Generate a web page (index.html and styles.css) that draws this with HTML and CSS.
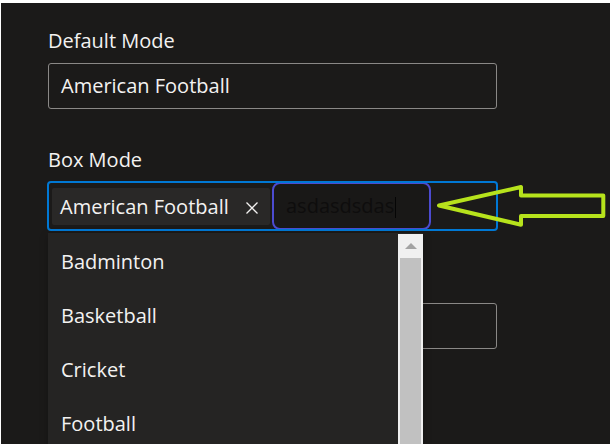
FILE: index.html
```html
<!DOCTYPE html>
<html lang="en">
<head>
<meta charset="utf-8">
<title>Modes</title>
<link rel="stylesheet" href="styles.css">
</head>
<body>
<div class="page">
  <div class="form">
    <div class="field">
      <label class="label">Default Mode</label>
      <div class="textfield">American Football</div>
    </div>
    <div class="field">
      <label class="label">Box Mode</label>
      <div class="combo">
        <div class="tag">
          <span class="tag-text">American Football</span>
          <span class="tag-close">
            <svg width="14" height="14" viewBox="0 0 14 14"><path d="M1.5 1.5 L12.5 12.5 M12.5 1.5 L1.5 12.5" stroke="#f3f2f1" stroke-width="1.3" fill="none"/></svg>
          </span>
        </div>
        <div class="picker-input"><span class="typed">asdasdsdas</span><span class="caret"></span></div>
      </div>
    </div>
    <div class="field">
      <div class="label label-empty"></div>
      <div class="textfield"></div>
    </div>
  </div>

  <div class="dropdown">
    <div class="options">
      <div class="option">Badminton</div>
      <div class="option">Basketball</div>
      <div class="option">Cricket</div>
      <div class="option">Football</div>
    </div>
    <div class="scrollbar">
      <div class="sb-up"><span class="sb-arrow"></span></div>
      <div class="sb-thumb"></div>
    </div>
  </div>

  <svg class="annotation" width="610" height="444" viewBox="0 0 610 444">
    <polygon points="439,205.5 521,187 521,195.5 603.3,195.5 603.3,216 521,216 521,224.7" fill="none" stroke="#b7e31c" stroke-width="4" stroke-linejoin="round"/>
  </svg>
</div>
</body>
</html>
```
FILE: styles.css
```css
html, body {
  margin: 0;
  padding: 0;
  background: #ffffff;
}

body {
  font-family: "Open Sans", "Noto Sans", sans-serif;
  color: #f3f2f1;
}

.page {
  position: relative;
  margin: 3px 0 0 1px;
  height: 441px;
  box-sizing: border-box;
  padding: 15px 0 0 47px;
  background: #1b1a19;
  overflow: hidden;
}

.form {
  width: 449px;
  display: flex;
  flex-direction: column;
  gap: 28px;
}

.field {
  display: flex;
  flex-direction: column;
}

.label {
  display: block;
  font-size: 20px;
  font-weight: 500;
  line-height: 30px;
  padding: 7.5px 0;
  color: #f3f2f1;
}

.label-empty {
  height: 30px;
}

.textfield {
  height: 46px;
  box-sizing: border-box;
  border: 1px solid #8a8886;
  border-radius: 3px;
  padding: 0 12px;
  font-size: 20px;
  line-height: 44px;
  color: #f3f2f1;
}

.combo {
  height: 48px;
  box-sizing: border-box;
  border-radius: 3px;
  outline: 2px solid #0078d4;
  outline-offset: -1px;
  display: flex;
  align-items: center;
  gap: 2px;
  padding-left: 4px;
}

.tag {
  width: 218px;
  height: 37px;
  flex: 0 0 auto;
  display: flex;
  align-items: center;
  background: #292827;
  border-radius: 2px;
  padding-left: 8px;
  box-sizing: border-box;
}

.tag-text {
  font-size: 20px;
  line-height: 37px;
  white-space: nowrap;
  color: #f3f2f1;
}

.tag-close {
  margin-left: auto;
  width: 36px;
  height: 37px;
  display: flex;
  align-items: center;
  justify-content: center;
  padding-top: 3px;
  box-sizing: border-box;
}

.picker-input {
  width: 159px;
  height: 48px;
  flex: 0 0 auto;
  box-sizing: border-box;
  border: 2px solid #4c4bd0;
  border-radius: 8px;
  background: #191817;
  padding-left: 12px;
  display: flex;
  align-items: center;
}

.typed {
  font-size: 20px;
  line-height: 44px;
  color: #0e0d0d;
  white-space: nowrap;
}

.caret {
  width: 1px;
  height: 21px;
  margin-left: 1px;
  margin-top: 3px;
  background: #050505;
}

.dropdown {
  position: absolute;
  top: 230px;
  left: 47px;
  width: 375px;
  height: 240px;
  display: flex;
  background: #252423;
  box-shadow: 0 3px 8px rgba(0, 0, 0, 0.25);
}

.options {
  flex: 1;
  padding-top: 2px;
}

.option {
  height: 54px;
  line-height: 54px;
  padding-left: 13px;
  font-size: 20px;
  color: #f3f2f1;
  white-space: nowrap;
}

.scrollbar {
  width: 25px;
  margin-top: 1px;
  background: #f0f0f0;
  display: flex;
  flex-direction: column;
}

.sb-up {
  height: 24px;
  display: flex;
  align-items: center;
  justify-content: center;
}

.sb-arrow {
  width: 0;
  height: 0;
  border-left: 6px solid transparent;
  border-right: 6px solid transparent;
  border-bottom: 6px solid #a3a3a3;
}

.sb-thumb {
  flex: 1;
  margin: 0 2px;
  background: #c1c1c1;
}

.annotation {
  position: absolute;
  left: -1px;
  top: -3px;
  pointer-events: none;
}
```
